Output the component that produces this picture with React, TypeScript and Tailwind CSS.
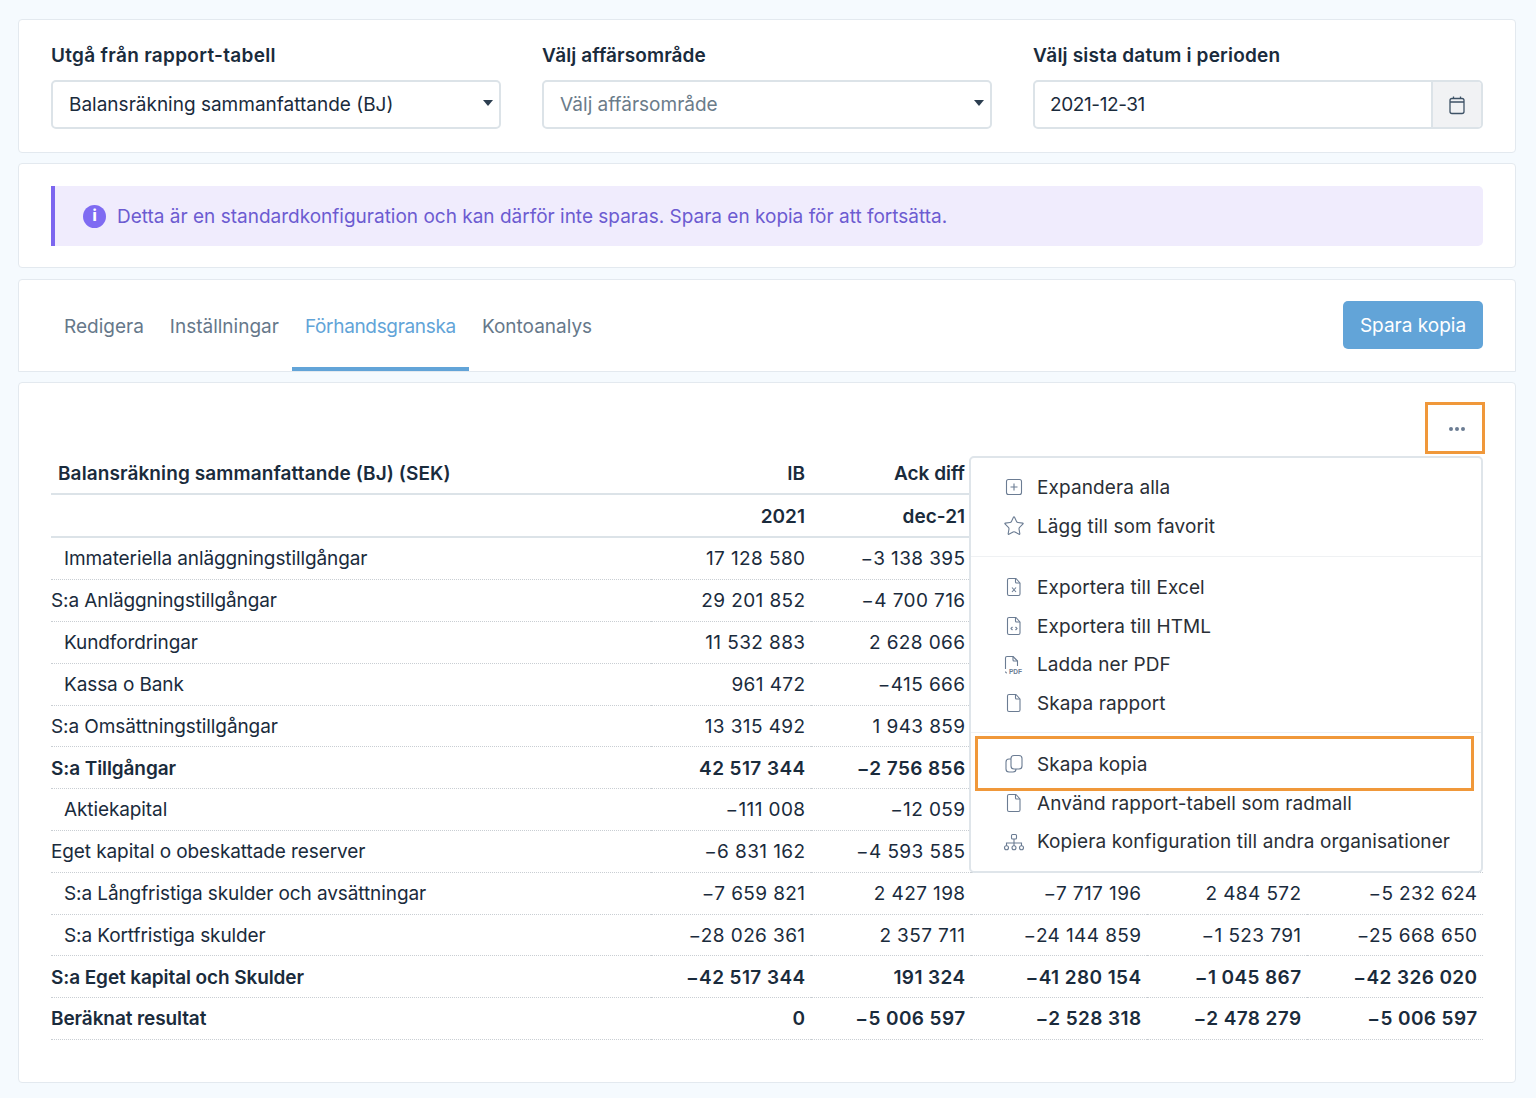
import { Star } from "lucide-react";

const font = "font-['Inter','Noto_Sans',sans-serif]";

type Row = { label: string; values: string[]; bold?: boolean; indent?: boolean };

const rows: Row[] = [
  { label: "Immateriella anläggningstillgångar", indent: true, values: ["17 128 580", "−3 138 395"] },
  { label: "S:a Anläggningstillgångar", values: ["29 201 852", "−4 700 716"] },
  { label: "Kundfordringar", indent: true, values: ["11 532 883", "2 628 066"] },
  { label: "Kassa o Bank", indent: true, values: ["961 472", "−415 666"] },
  { label: "S:a Omsättningstillgångar", values: ["13 315 492", "1 943 859"] },
  { label: "S:a Tillgångar", bold: true, values: ["42 517 344", "−2 756 856"] },
  { label: "Aktiekapital", indent: true, values: ["−111 008", "−12 059"] },
  { label: "Eget kapital o obeskattade reserver", values: ["−6 831 162", "−4 593 585"] },
  { label: "S:a Långfristiga skulder och avsättningar", indent: true, values: ["−7 659 821", "2 427 198", "−7 717 196", "2 484 572", "−5 232 624"] },
  { label: "S:a Kortfristiga skulder", indent: true, values: ["−28 026 361", "2 357 711", "−24 144 859", "−1 523 791", "−25 668 650"] },
  { label: "S:a Eget kapital och Skulder", bold: true, values: ["−42 517 344", "191 324", "−41 280 154", "−1 045 867", "−42 326 020"] },
  { label: "Beräknat resultat", bold: true, values: ["0", "−5 006 597", "−2 528 318", "−2 478 279", "−5 006 597"] },
];

const colWidths = ["w-[160px]", "w-[160px]", "w-[176px]", "w-[160px]", "w-[176px]"];

function FileIcon({ children }: { children?: React.ReactNode }) {
  return (
    <svg className="w-[20px] h-[20px]" viewBox="0 0 20 20" fill="none" stroke="#6b7c93" strokeWidth={1.1} strokeLinejoin="round">
      <path d="M5 1.5h7l4 4.5v11a1.5 1.5 0 01-1.5 1.5h-9.500A1.500 1.500 0 013.500 17V3A1.500 1.500 0 015 1.500z" />
      <path d="M11.500 1.500v3.500a1 1 0 001 1h3.500" />
      {children}
    </svg>
  );
}

const PlusBox = () => (
  <svg className="w-[20px] h-[20px]" viewBox="0 0 20 20" fill="none" stroke="#6b7c93" strokeWidth={1.1}>
    <rect x="2.500" y="2.500" width="15" height="15" rx="2" />
    <path d="M10 6.500v7M6.500 10h7" />
  </svg>
);

const PdfIcon = () => (
  <svg className="w-[22px] h-[20px] -ml-[2px]" viewBox="0 0 22 20" fill="none" stroke="#6b7c93" strokeWidth={1.1} strokeLinejoin="round">
    <path d="M3.500 14V3A1.500 1.500 0 015 1.500h6l4.500 4.500v5" />
    <path d="M11 1.500v3.500a1 1 0 001 1h3.500" />
    <path d="M3.500 16.500a1.500 1.500 0 001.500 1.500" />
    <text x="7" y="18.500" fontSize="6.500" fontWeight="700" fill="#6b7c93" stroke="none" fontFamily="Liberation Sans, sans-serif">PDF</text>
  </svg>
);

const CopyIcon = () => (
  <svg className="w-[20px] h-[20px]" viewBox="0 0 20 20" fill="none" stroke="#6b7c93" strokeWidth={1.1} strokeLinejoin="round">
    <rect x="7" y="1.500" width="11" height="13.500" rx="3" />
    <path d="M7 5H5a3 3 0 00-3 3v7a3 3 0 003 3h4a3 3 0 003-3" />
  </svg>
);

const OrgIcon = () => (
  <svg className="w-[22px] h-[20px] -ml-[1px]" viewBox="0 0 22 20" fill="none" stroke="#6b7c93" strokeWidth={1.1}>
    <rect x="8.500" y="2.500" width="5" height="4.500" rx="1" />
    <path d="M11 7v4M3.500 14v-3h15v3M11 11v3" />
    <circle cx="3.500" cy="15.800" r="2" />
    <circle cx="11" cy="15.800" r="2" />
    <circle cx="18.500" cy="15.800" r="2" />
  </svg>
);

function MenuItem({ icon, label }: { icon: React.ReactNode; label: string }) {
  return (
    <div className="flex items-center h-[38.700px]">
      <div className="w-[32px] ml-[28px] flex justify-start pl-[5px]">{icon}</div>
      <span className="ml-[6px] pt-[2px] tracking-[0.1px] text-[#2a2f36] whitespace-nowrap">{label}</span>
    </div>
  );
}

export default function App() {
  return (
    <div className={`${font} min-h-[1098px] bg-[#f5fafe] pl-[18px] pr-[20px] pt-[19px] text-[19px] text-[#1a2b3c]`}>
      {/* Filters */}
      <div className="h-[134px] bg-white border border-[#e3e9ef] rounded-[4px] px-[32px] pt-[24px] grid grid-cols-3 gap-[41px]">
        <div>
          <label className="block font-semibold tracking-[0.3px] leading-[24px] mb-[12px]">Utgå från rapport-tabell</label>
          <div className="relative h-[49px] border-2 border-[#dce3e8] rounded-[5px] flex items-center pl-[16px] pt-[2px]">
            Balansräkning sammanfattande (BJ)
            <span className="absolute right-[6px] top-[18px] border-x-[5px] border-x-transparent border-t-[6px] border-t-[#2c3e50]" />
          </div>
        </div>
        <div>
          <label className="block font-semibold tracking-[0.1px] leading-[24px] mb-[12px]">Välj affärsområde</label>
          <div className="relative h-[49px] border-2 border-[#dce3e8] rounded-[5px] flex items-center pl-[16px] pt-[2px] text-[#6b7c8a]">
            Välj affärsområde
            <span className="absolute right-[6px] top-[18px] border-x-[5px] border-x-transparent border-t-[6px] border-t-[#2c3e50]" />
          </div>
        </div>
        <div>
          <label className="block font-semibold tracking-[0.2px] leading-[24px] mb-[12px]">Välj sista datum i perioden</label>
          <div className="h-[49px] border-2 border-[#dce3e8] rounded-[5px] flex items-center overflow-hidden">
            <span className="flex-1 pl-[15px] pt-[2px] tracking-[-0.4px]">2021-12-31</span>
            <div className="w-[50px] h-full bg-[#f1f2f4] border-l-2 border-[#dce3e8] flex items-center justify-center">
              <svg className="w-[20px] h-[20px]" viewBox="0 0 20 20" fill="none" stroke="#3e5266" strokeWidth={1.300}>
                <rect x="3" y="3.500" width="14" height="15" rx="2" />
                <path d="M3 7h14M6.500 1.500v2M13.500 1.500v2" />
              </svg>
            </div>
          </div>
        </div>
      </div>

      {/* Notice */}
      <div className="mt-[10px] h-[105px] bg-white border border-[#e3e9ef] rounded-[4px] px-[32px] pt-[22px]">
        <div className="h-[60px] bg-[#f0ecfd] border-l-[4px] border-[#7c66ef] rounded-r-[5px] flex items-center pl-[28px]">
          <span className="w-[23px] h-[23px] rounded-full bg-[#7f6bf2] text-white flex items-center justify-center text-[15px] font-extrabold">i</span>
          <span className="ml-[11px] pt-[2px] text-[#6c5bd1]">Detta är en standardkonfiguration och kan därför inte sparas. Spara en kopia för att fortsätta.</span>
        </div>
      </div>

      {/* Tabs */}
      <div className="mt-[11px] h-[93px] bg-white border border-[#e3e9ef] rounded-t-[4px] px-[32px] flex items-start justify-between">
        <div className="flex h-full text-[#66788a]">
          {["Redigera", "Inställningar", "Förhandsgranska", "Kontoanalys"].map((t) => (
            <div
              key={t}
              className={`px-[13px] pt-[33px] border-b-[4px] ${
                t === "Förhandsgranska" ? "text-[#62a4d8] border-[#62a4d8] tracking-[-0.33px]" : "border-transparent"
              }`}
            >
              {t}
            </div>
          ))}
        </div>
        <button className="mt-[21px] h-[48px] w-[140px] pt-[2px] bg-[#62a4d8] rounded-[5px] text-white">Spara kopia</button>
      </div>

      {/* Report */}
      <div className="relative mt-[10px] h-[701px] bg-white border border-[#e3e9ef] rounded-[4px] px-[32px] pt-[70px]">
        <table className="w-full table-fixed border-collapse">
          <colgroup>
            <col />
            {colWidths.map((w, i) => (
              <col key={i} className={w} />
            ))}
          </colgroup>
          <thead>
            <tr className="h-[41px] border-b-2 border-[#dce3e8]">
              <th className="text-left pl-[7px] pt-[3px] font-semibold tracking-[0.1px]">Balansräkning sammanfattande (BJ) (SEK)</th>
              <th className="text-right pr-[6px] pt-[3px] font-semibold">IB</th>
              <th className="text-right pr-[6px] pt-[3px] font-semibold">Ack diff</th>
              <th />
              <th />
              <th />
            </tr>
            <tr className="h-[43px] border-b-2 border-[#dce3e8]">
              <th />
              <th className="text-right pr-[6px] pt-[4px] font-semibold">2021</th>
              <th className="text-right pr-[6px] pt-[4px] font-semibold">dec-21</th>
              <th />
              <th />
              <th />
            </tr>
          </thead>
          <tbody>
            {rows.map((r) => (
              <tr key={r.label} className={`h-[41.800px] first:h-[42.800px] border-b border-dotted border-[#c9ced3] ${r.bold ? "font-semibold" : ""}`}>
                <td className={`pt-[2px] tracking-[-0.1px] ${r.indent ? "pl-[13px]" : ""}`}>{r.label}</td>
                {[0, 1, 2, 3, 4].map((i) => (
                  <td key={i} className="text-right pr-[5.500px] pt-[2px] tracking-[0.4px] whitespace-nowrap">
                    {r.values[i]}
                  </td>
                ))}
              </tr>
            ))}
          </tbody>
        </table>

        {/* Menu button */}
        <div className="absolute right-[30px] top-[19px] w-[60px] h-[52px] border-[3px] border-[#f0983a] flex items-center justify-center">
          <div className="flex gap-[2px] ml-[4px] mt-[2px]">
            <span className="w-[4px] h-[4px] rounded-full bg-[#6b7c93]" />
            <span className="w-[4px] h-[4px] rounded-full bg-[#6b7c93]" />
            <span className="w-[4px] h-[4px] rounded-full bg-[#6b7c93]" />
          </div>
        </div>

        {/* Dropdown */}
        <div className="absolute left-[950px] top-[73px] w-[514px] h-[417px] bg-white border-2 border-[#dfe5ea] rounded-[5px]">
          <div className="h-[99px] border-b border-[#eff1f3] pt-[10px]">
            <MenuItem icon={<PlusBox />} label="Expandera alla" />
            <MenuItem icon={<Star className="w-[22px] h-[22px] text-[#6b7c93] -ml-[1px]" strokeWidth={1.200} />} label="Lägg till som favorit" />
          </div>
          <div className="h-[176px] border-b border-[#eff1f3] pt-[11px]">
            <MenuItem
              icon={
                <FileIcon>
                  <path d="M8 10.500l4 4.500M12 10.500l-4 4.500" />
                </FileIcon>
              }
              label="Exportera till Excel"
            />
            <MenuItem
              icon={
                <FileIcon>
                  <path d="M8.500 11l-1.500 1.500 1.500 1.500M11.500 11l1.500 1.500-1.500 1.500" />
                </FileIcon>
              }
              label="Exportera till HTML"
            />
            <MenuItem icon={<PdfIcon />} label="Ladda ner PDF" />
            <MenuItem icon={<FileIcon />} label="Skapa rapport" />
          </div>
          <div className="pt-[12px]">
            <MenuItem icon={<CopyIcon />} label="Skapa kopia" />
            <MenuItem icon={<FileIcon />} label="Använd rapport-tabell som radmall" />
            <MenuItem icon={<OrgIcon />} label="Kopiera konfiguration till andra organisationer" />
          </div>
        </div>

        {/* Highlight */}
        <div className="absolute left-[956px] top-[353px] w-[499px] h-[55px] border-[3px] border-[#f0983a]" />
      </div>
    </div>
  );
}
